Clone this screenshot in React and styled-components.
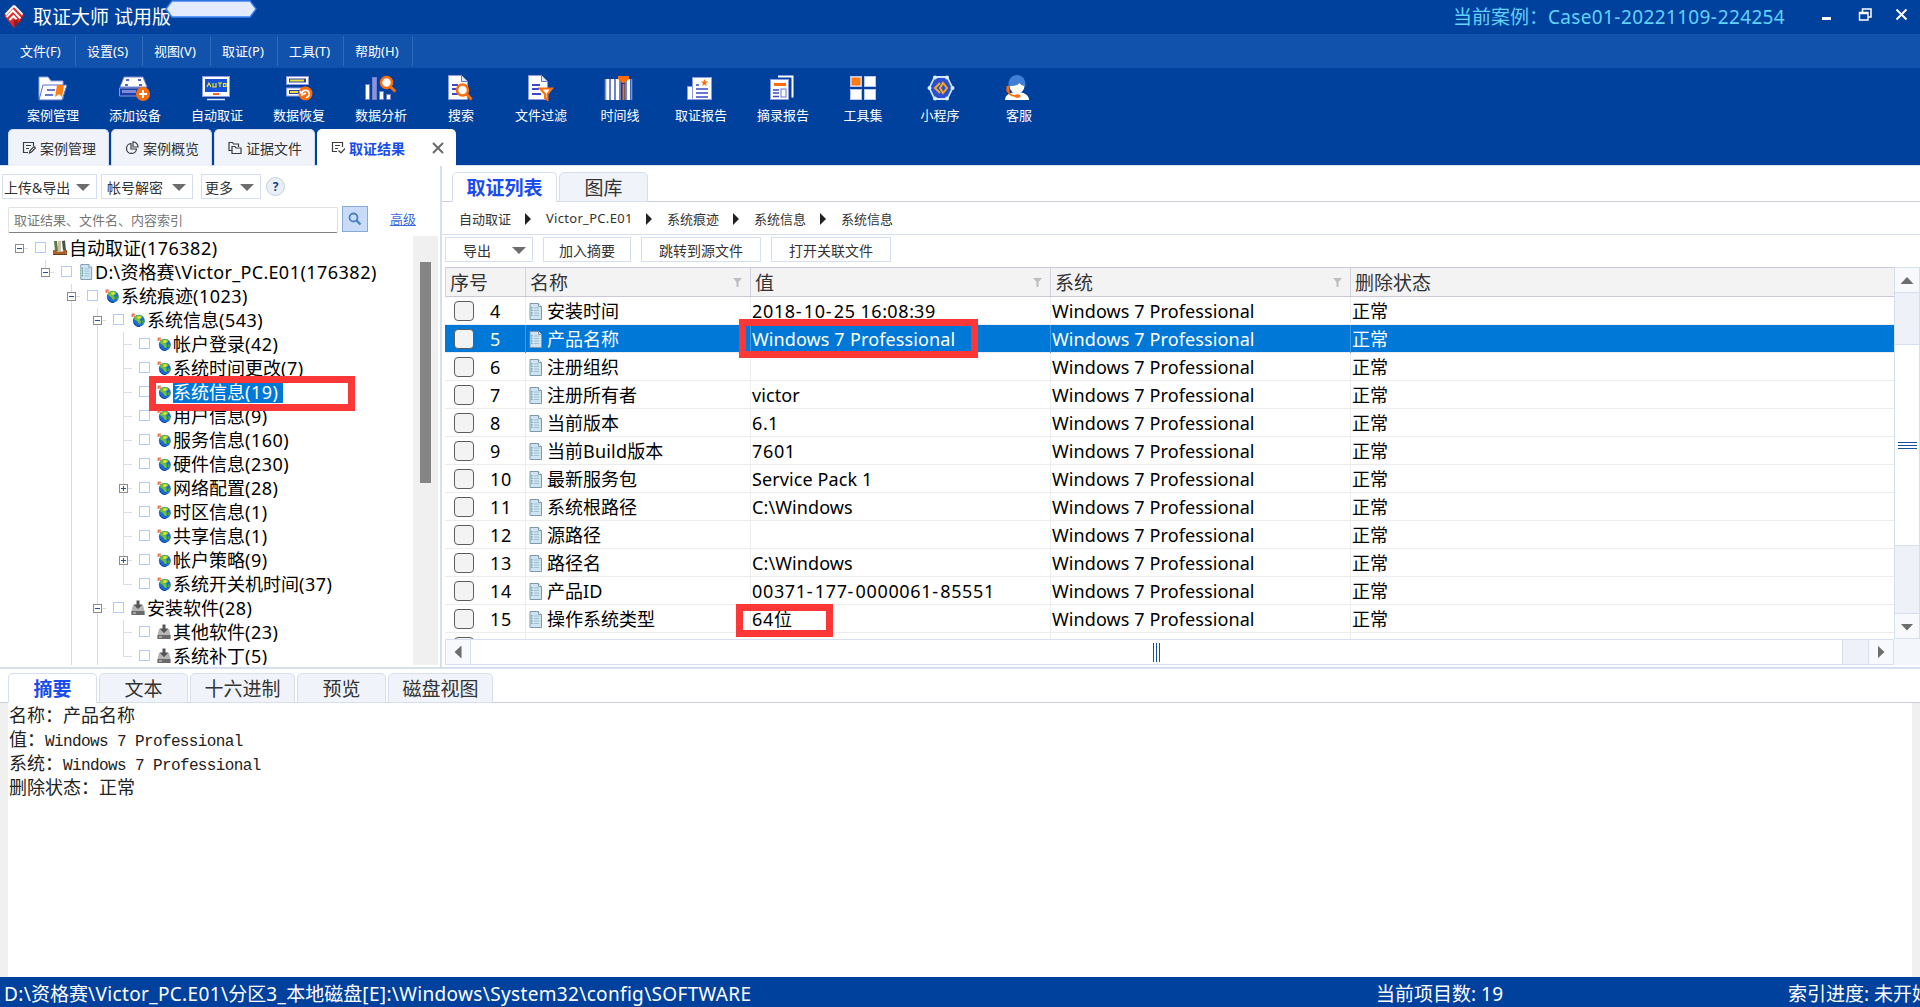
import React from "react";
import styled, { createGlobalStyle, css } from "styled-components";

const Global = createGlobalStyle`
  * { box-sizing: border-box; }
  html, body { margin: 0; padding: 0; }
  body { overflow: hidden; background: #fff; }
`;

const sans = `"Noto Sans", "Noto Sans CJK SC", sans-serif`;
const cjk = `"Noto Sans CJK SC", sans-serif`;
const navy = "#00419e";
const edge = "#d5dff0";
const red = "#fb3737";

/* ---------- text with separately tracked latin, digit and hyphen runs ---------- */
const Run = styled.span`
  letter-spacing: ${(p) => p.$ls}px;
`;
const Mixed = ({ text, ls = 0.1, digits = ls, hyphen = digits }) =>
  text.split(/([\u2e80-\uffef]+|[0-9]+|-)/).map((part, i) => {
    if (!part) return null;
    if (/^[\u2e80-\uffef]/.test(part)) return part;
    const gap = part === "-" ? hyphen : /^[0-9]/.test(part) ? digits : ls;
    return <Run key={i} $ls={gap}>{part}</Run>;
  });

/* ---------- shell ---------- */
const Shell = styled.div`
  width: 1920px;
  height: 1007px;
  display: flex;
  flex-direction: column;
  overflow: hidden;
  background: #fff;
  color: #000;
  font-family: ${sans};
  font-size: 18px;
  white-space: pre;
`;
const TitleBar = styled.header`
  position: relative;
  height: 34px;
  flex: none;
  display: flex;
  align-items: center;
  padding-left: 4px;
  background: ${navy};
  color: #fff;
  font-size: 19px;
  line-height: 34px;
`;
const AppName = styled.div`
  margin-left: 9px;
  flex: 1;
`;
const CaseName = styled.div`
  width: 369px;
  color: #62d2fb;
`;
const WinButtons = styled.div`
  width: 98px;
  height: 34px;
`;
const Pill = styled.svg`
  position: absolute;
  left: 165px;
  top: 0;
`;
const MenuBar = styled.nav`
  height: 34px;
  flex: none;
  display: flex;
  align-items: center;
  background: #1152ad;
  color: #fff;
  font-size: 13px;
`;
const MenuItem = styled.div`
  width: ${(p) => p.$w}px;
  height: 30px;
  line-height: 30px;
  padding-left: ${(p) => p.$pad || 11}px;
  border-right: 1px solid #2f69ba;
`;
const Toolbar = styled.div`
  height: 61px;
  flex: none;
  display: flex;
  padding-left: 12px;
  background: ${navy};
  color: #fff;
  font-size: 13px;
`;
const Tool = styled.div`
  width: ${(p) => p.$w}px;
  padding-top: 7px;
  display: flex;
  flex-direction: column;
  align-items: center;
  line-height: 20px;
  svg { display: block; margin: 0 2px 4px 0; }
`;
const TabStrip = styled.div`
  height: 37px;
  flex: none;
  display: flex;
  gap: 2px;
  padding-left: 8px;
  background: ${navy};
  border-bottom: 1px solid ${edge};
`;
const PageTab = styled.div`
  height: 37px;
  width: ${(p) => (p.$active ? 139 : 101)}px;
  padding-left: 13px;
  display: flex;
  align-items: center;
  border: 1px solid ${(p) => (p.$active ? "#fff" : "#d3ddee")};
  border-bottom: 0;
  border-radius: 5px 5px 0 0;
  background: ${(p) => (p.$active ? "#fff" : "#f0f3f9")};
  color: ${(p) => (p.$active ? "#194bee" : "#333")};
  font-weight: ${(p) => (p.$active ? 700 : 400)};
  font-size: 14px;
  svg { margin-right: 4px; }
`;
const TabClose = styled.div`
  margin-left: 27px;
  display: flex;
`;

/* ---------- main split ---------- */
const Work = styled.main`
  height: 503px;
  flex: none;
  display: flex;
  border-bottom: 2px solid ${edge};
`;
const LeftPane = styled.section`
  width: 442px;
  flex: none;
  padding: 8px 0 0;
  border-right: 2px solid ${edge};
`;
const LeftTools = styled.div`
  display: flex;
  height: 25px;
  padding-left: 2px;
  color: #333;
  font-size: 14px;
`;
const DropButton = styled.div`
  width: ${(p) => p.$w}px;
  margin-right: ${(p) => p.$mr}px;
  height: 25px;
  padding: 0 6px 0 ${(p) => p.$pl}px;
  display: flex;
  align-items: center;
  justify-content: space-between;
  border: 1px solid ${edge};
  background: #fff;
`;
const Help = styled.div`
  width: 19px;
  height: 19px;
  margin-top: 3px;
  border: 1px solid #c3d0e2;
  border-radius: 50%;
  background: #e9eff5;
  color: #173f8c;
  font: 700 12px/17px ${sans};
  text-align: center;
`;
const SearchRow = styled.div`
  display: flex;
  height: 30px;
  padding: 8px 0 0 8px;
`;
const SearchBox = styled.div`
  width: 330px;
  height: 26px;
  padding-left: 5px;
  border: 1px solid #e2e2e2;
  border-bottom: 1px solid #808080;
  border-radius: 2px;
  color: #777;
  font: 13px/23px ${cjk};
`;
const SearchButton = styled.div`
  width: 26px;
  height: 26px;
  margin-left: 4px;
  margin-top: -1px;
  display: flex;
  align-items: center;
  justify-content: center;
  border: 1px solid #88abd3;
  background: #c8dcfa;
`;
const AdvLink = styled.a`
  margin-left: 22px;
  color: #3a6cdd;
  text-decoration: underline;
  font: 13px/24px ${cjk};
`;
const TreeArea = styled.div`
  display: flex;
  height: 429px;
  margin-top: 7px;
`;
const Tree = styled.div`
  position: relative;
  width: 413px;
  overflow: hidden;
`;
const TreeTrack = styled.div`
  width: 25px;
  padding: 26px 7px 0;
  background: #f0f0f0;
`;
const TreeThumb = styled.div`
  height: 221px;
  background: #858585;
`;
const TreeRow = styled.div`
  height: 24px;
  padding-left: 6px;
  display: flex;
  align-items: center;
`;
const vline = (h) => `linear-gradient(#dcdcdc,#dcdcdc) 13px 0 / 1px ${h}px no-repeat`;
const stub = `linear-gradient(#dcdcdc,#dcdcdc) 13px 12px / 9px 1px no-repeat`;
const guideBg = {
  " ": "none",
  "|": vline(24),
  T: `${vline(24)}, ${stub}`,
  L: `${vline(12)}, ${stub}`,
  ".": stub,
};
const Guide = styled.div`
  width: 26px;
  height: 24px;
  padding: 8px 0 0 9px;
  background: ${(p) => guideBg[p.$kind]};
  svg { display: block; }
`;
const TreeCheck = styled.div`
  width: 11px;
  height: 11px;
  margin: -1px 7px 0 3px;
  border: 1px solid #b4caff;
  background: #fff;
`;
const TreeLabel = styled.div`
  margin-left: 2px;
  height: 21px;
  line-height: 21px;
  padding-right: 5px;
  ${(p) => p.$on && css`background: #0078d7; color: #fff;`}
`;
const Mark = styled.div`
  position: absolute;
  left: ${(p) => p.$x}px;
  top: ${(p) => p.$y}px;
  width: ${(p) => p.$w}px;
  height: ${(p) => p.$h}px;
  border: 7px solid ${red};
`;

/* ---------- right pane ---------- */
const RightPane = styled.section`
  width: 1478px;
  display: flex;
  flex-direction: column;
`;
const SubTabs = styled.div`
  height: ${(p) => p.$h}px;
  padding: ${(p) => p.$pad};
  flex: none;
  display: flex;
  align-items: flex-end;
  gap: 2px;
  background: linear-gradient(#cdcddd, #cdcddd) 0 100% / 100% 1px no-repeat;
`;
const SubTab = styled.div`
  width: ${(p) => p.$w}px;
  height: 30px;
  text-align: center;
  border: 1px solid ${edge};
  border-bottom-color: ${(p) => (p.$active ? "#fff" : edge)};
  border-radius: 5px 5px 0 0;
  background: ${(p) => (p.$active ? "#fff" : "#f0f3f9")};
  color: ${(p) => (p.$active ? "#194bee" : "#333")};
  font: ${(p) => (p.$active ? 700 : 400)} 19px/27px ${cjk};
`;
const Crumbs = styled.div`
  height: 33px;
  flex: none;
  display: flex;
  align-items: center;
  padding-left: 17px;
  border-bottom: 1px solid ${edge};
  color: #333;
  font-size: 13px;
`;
const Crumb = styled.span`
  width: ${(p) => p.$w}px;
`;
const CrumbArrow = styled.span`
  width: 6px;
  height: 12px;
  margin: 2px 15px 0 14px;
  background: #222;
  clip-path: polygon(0 0, 100% 50%, 0 100%);
`;
const Actions = styled.div`
  height: 32px;
  flex: none;
  display: flex;
  gap: 10px;
  padding: 2px 0 0 3px;
`;
const Action = styled.div`
  width: ${(p) => p.$w}px;
  height: 25px;
  padding: 0 ${(p) => (p.$menu ? "6px 0 17px" : "0")};
  display: flex;
  align-items: center;
  justify-content: ${(p) => (p.$menu ? "space-between" : "center")};
  border: 1px solid ${edge};
  color: #333;
  font-size: 14px;
`;
const GridArea = styled.div`
  height: 398px;
  display: grid;
  grid-template-columns: 1449px 26px;
  grid-template-rows: 372px 26px;
  margin-left: 3px;
`;
const Table = styled.div`
  position: relative;
  overflow: hidden;
`;
const Columns = css`
  display: grid;
  grid-template-columns: 81px 225px 300px 300px 543px;
`;
const HeadRow = styled.div`
  ${Columns}
  height: 30px;
  border-top: 1px solid #c9c9da;
  border-bottom: 1px solid #c9c9da;
  box-shadow: inset 1px 0 #d6d6e2;
  background: #f3f3f3;
  color: #333;
  font: 19px/26px ${cjk};
`;
const HeadCell = styled.div`
  display: flex;
  justify-content: space-between;
  align-items: center;
  padding: 0 8px 0 ${(p) => p.$pl || 4}px;
  border-right: ${(p) => (p.$last ? 0 : 1)}px solid #d3d3df;
`;
const Row = styled.div`
  ${Columns}
  height: 28px;
  border-bottom: 1px solid #ececec;
  ${(p) => p.$on && css`background: #0078d7; color: #fff;`}
`;
const Cell = styled.div`
  display: flex;
  align-items: center;
  padding-left: ${(p) => p.$pl}px;
  line-height: 27px;
  border-right: ${(p) => (p.$last ? 0 : 1)}px solid ${(p) => (p.$on ? "#3f98e0" : "#ededed")};
  svg { margin-right: 5px; flex: none; }
`;
const CellText = styled.span`
  padding-top: 1px;
`;
const Check = styled.div`
  width: 20px;
  height: 20px;
  margin-right: 16px;
  border: 1.5px solid #5e5e5e;
  border-radius: 4px;
  background: #f3f3f3;
`;
const Tri = styled.div`
  width: ${(p) => p.$w}px;
  height: ${(p) => p.$h}px;
  margin-top: ${(p) => p.$mt || 0}px;
  background: #6d6d6d;
  clip-path: polygon(${(p) =>
    ({
      down: "0 0, 100% 0, 50% 100%",
      up: "50% 0, 100% 100%, 0 100%",
      left: "100% 0, 100% 100%, 0 50%",
      right: "0 0, 100% 50%, 0 100%",
    })[p.$dir]});
`;
const VBar = styled.div`
  display: flex;
  flex-direction: column;
  border: 1px solid ${edge};
  border-bottom: 0;
  background: #eef1f7;
`;
const HBar = styled.div`
  display: flex;
  border: 1px solid ${edge};
  background: #eef1f7;
`;
const ArrowBox = styled.div`
  flex: none;
  width: ${(p) => (p.$h ? 25 : 24)}px;
  height: ${(p) => (p.$h ? 24 : p.$tall ? 26 : 25)}px;
  display: flex;
  align-items: center;
  justify-content: center;
  background: #f8f9fc;
  border: 0 solid ${edge};
  border-width: ${(p) => p.$bw};
`;
const VThumb = styled.div`
  margin-top: 51px;
  margin-bottom: 67px;
  flex: 1;
  display: flex;
  flex-direction: column;
  align-items: center;
  justify-content: center;
  gap: 2px;
  background: #fff;
  border: solid ${edge};
  border-width: 1px 0;
`;
const HThumb = styled.div`
  width: 1372px;
  margin-right: 25px;
  display: flex;
  align-items: center;
  justify-content: center;
  gap: 2px;
  background: #fff;
  border-right: 1px solid ${edge};
`;
const Grip = styled.i`
  width: ${(p) => (p.$v ? 19 : 1)}px;
  height: ${(p) => (p.$v ? 1 : 19)}px;
  background: #1250a3;
`;
const Corner = styled.div`
  background: #f3f6fb;
`;

/* ---------- bottom ---------- */
const Detail = styled.section`
  height: 274px;
  flex: none;
  padding-left: 1px;
  border: solid #f0f0f0;
  border-width: 0 8px;
`;
const Line = styled.p`
  margin: 0;
  height: 24px;
  line-height: 22px;
  font-family: ${cjk};
  font-size: 18px;
  color: #222;
`;
const Mono = styled.span`
  font: 16px/20px "Liberation Mono", monospace;
  letter-spacing: -0.61px;
`;
const StatusBar = styled.footer`
  height: 30px;
  flex: none;
  display: flex;
  padding-left: 4px;
  background: ${navy};
  color: #fff;
  font-size: 19px;
  line-height: 34px;
`;
const StatusItem = styled.div`
  width: ${(p) => p.$w}px;
  flex: none;
`;

/* ---------- icons ---------- */
const Logo = () => (
  <svg width="20" height="24" viewBox="0 0 20 24">
    <path d="M10 0 20 10.500 10 23 0 10.500Z" fill="#e3282b" />
    <path d="M10 .8 18.500 9.500M10 .8 1.500 9.500" stroke="#fff" strokeWidth="2" />
    <path d="M2.500 12 9 5.500l7.500 8M5.500 15 9.500 11l3.500 4" fill="none" stroke="#fff" strokeWidth="2" />
    <path d="M10 15v8l10-12.500-3 1.500v5l-3 1v-4Z" fill="#9f181c" />
  </svg>
);

const toolIcons = {
  folder: (
    <g>
      <path d="M3 24V2h9l3 4h12v18Z" fill="#fff" stroke="#8fa2e0" />
      <path d="M7 10h24l-5 15H3Z" fill="#fff" stroke="#5a6fca" />
      <path d="M11 15h8M9 20h8" stroke="#3a49c8" strokeWidth="1.6" />
      <path d="M21 10h7l-2 12-3-3-4 3Z" fill="#ff7e10" />
    </g>
  ),
  disk: (
    <g>
      <path d="M6 2h19l4 10H2Z" fill="#fff" stroke="#7a86d0" />
      <path d="M8 5h3M20 5h3M7 10h3M21 10h3" stroke="#5566c8" strokeWidth="2" />
      <path d="M1.500 13h27v8h-27Z" fill="#1b3fa5" stroke="#8d98e0" />
      <path d="M4 16.500h14" stroke="#8088d8" strokeWidth="3" />
      <circle cx="25" cy="19" r="7" fill="#ff6d0a" />
      <path d="M21 19h8M25 15v8" stroke="#fff" strokeWidth="2" />
    </g>
  ),
  monitor: (
    <g>
      <rect x="2.500" y="1.500" width="27" height="20" fill="#fff" stroke="#8f9be0" />
      <rect x="5" y="4" width="22" height="13" fill="#1552d8" />
      <path d="M7 12l2-4 2 4M13 8v4h3V8M18 8h4M20 8v4M23.500 8.500h2.500v3h-2.500z" fill="none" stroke="#f0ea20" strokeWidth="1.200" />
      <path d="M13 19h6" stroke="#ff5a20" strokeWidth="2" />
      <path d="M7 24.500h18" stroke="#dfe6ff" strokeWidth="1.500" />
    </g>
  ),
  restore: (
    <g>
      <rect x="4.500" y="1.500" width="22" height="8" fill="#fff" stroke="#8f9be0" />
      <path d="M7 5.500h17" stroke="#2340b8" strokeWidth="4" />
      <path d="M8 5.500h14" stroke="#e8e23a" strokeWidth="2" />
      <rect x="4.500" y="13" width="22" height="8" fill="#fff" stroke="#8f9be0" />
      <path d="M7 17h12" stroke="#2340b8" strokeWidth="4" />
      <path d="M8 17h8" stroke="#e8e23a" strokeWidth="2" />
      <circle cx="23.500" cy="18.500" r="7" fill="#ff6d0a" />
      <path d="M20 19a3.600 3.600 0 1 1 4 3.500M18 16l2 4 4-2" fill="none" stroke="#fff" strokeWidth="1.600" />
    </g>
  ),
  chart: (
    <g fill="#fff" stroke="#7480d0">
      <rect x="1.500" y="9.500" width="4" height="15" />
      <rect x="8.500" y="2.500" width="4" height="22" fill="#8a93dc" />
      <rect x="15.500" y="16.500" width="4" height="8" />
      <rect x="22.500" y="19.500" width="4" height="5" />
      <circle cx="22.500" cy="7.500" r="5.500" stroke="#ff6d0a" strokeWidth="2.500" />
      <path d="M26.500 12l5 4.500" stroke="#ff6d0a" strokeWidth="3" />
    </g>
  ),
  search: (
    <g>
      <path d="M4.500 24.500V.5h13l6 6v18Z" fill="#fff" stroke="#8f9be0" />
      <path d="M17.500.5v6h6" fill="#dfe4fa" stroke="#6474cc" />
      <path d="M8 10h6M8 14h6M8 19h8" stroke="#3a49c8" strokeWidth="1.800" />
      <circle cx="18.500" cy="15" r="5.500" fill="#fff" stroke="#ff6d0a" strokeWidth="2.500" />
      <path d="M22.500 19l5 5.500" stroke="#ff6d0a" strokeWidth="3" />
    </g>
  ),
  filter: (
    <g>
      <path d="M4.500 24.500V.5h13l6 6v18Z" fill="#fff" stroke="#8f9be0" />
      <path d="M17.500.5v6h6" fill="#dfe4fa" stroke="#6474cc" />
      <path d="M8 10h8M8 14h7M8 19h9" stroke="#3a49c8" strokeWidth="1.800" />
      <path d="M16 13.500h12l-4.500 5.500v6l-2.500-2v-4Z" fill="#fff" stroke="#ff6d0a" strokeWidth="2" />
    </g>
  ),
  timeline: (
    <g>
      <path d="M4.500 4v21M9.500 4v21M14.500 4v21M25.500 4v21" stroke="#fff" strokeWidth="3.200" />
      <path d="M7 4v21M12 4v21M17 4v21M23 4v21M28.500 4v21M2.500 4v21" stroke="#8690da" strokeWidth="1.600" />
      <path d="M20.500 9v16" stroke="#ff6d0a" strokeWidth="2" />
      <path d="M15 1h11v3l-4.500 4h-2L15 4Z" fill="#ff6d0a" />
    </g>
  ),
  report: (
    <g>
      <path d="M3.500 24.500v-13h5v13Z" fill="#fff" stroke="#8f9be0" />
      <rect x="8.500" y="2.500" width="19" height="22" fill="#fff" stroke="#8f9be0" />
      <path d="M12 10h3M12 14h12M12 18h12M12 22h12" stroke="#3a49c8" strokeWidth="1.600" />
      <path d="M20.500 4l1 2.600h2.600l-2.100 1.700.8 2.700-2.300-1.600-2.300 1.600.8-2.700L17 6.600h2.600Z" fill="#ff6d0a" />
    </g>
  ),
  excerpt: (
    <g>
      <path d="M12 1.500h14.500v21" fill="none" stroke="#fff" strokeWidth="2" />
      <rect x="4.500" y="4.500" width="18" height="20" fill="#fff" stroke="#8f9be0" />
      <path d="M8 9.500h12" stroke="#ff6d0a" strokeWidth="3" />
      <path d="M7 15h6M7 18h6M7 21.500h6" stroke="#3a49c8" strokeWidth="1.400" />
      <rect x="15" y="14" width="5" height="8" fill="#fff" stroke="#6474cc" />
    </g>
  ),
  grid: (
    <g fill="#fff" stroke="#b8c4f2">
      <rect x="4.500" y="1.500" width="11" height="10" />
      <rect x="18.500" y="1.500" width="11" height="10" />
      <rect x="4.500" y="14.500" width="11" height="10" />
      <rect x="18.500" y="14.500" width="11" height="10" />
      <rect x="6" y="3" width="8" height="7" fill="#ff7e10" stroke="#ff6d0a" />
    </g>
  ),
  hex: (
    <g transform="translate(2 0)">
      <path d="M9 2h14l6 11-6 11H9L3 13Z" transform="translate(1.500 0) scale(.9 1)" fill="#2b50cf" stroke="#cfe6ff" strokeWidth="1.800" />
      <g fill="#d8f0ff">
        <circle cx="10" cy="2.500" r="2" />
        <circle cx="22" cy="2.500" r="2" />
        <circle cx="27.500" cy="13" r="2" />
        <circle cx="22" cy="23.500" r="2" />
        <circle cx="10" cy="23.500" r="2" />
        <circle cx="4.500" cy="13" r="2" />
      </g>
      <path d="M15 8l-5 5 5 5M18 8l-3 5 3 5 4-5Z" fill="none" stroke="#f7a823" strokeWidth="2" />
    </g>
  ),
  agent: (
    <g>
      <path d="M3 25c0-5 5-8 12-8s12 3 12 8Z" fill="#fff" />
      <circle cx="15" cy="11" r="7.500" fill="#fff" />
      <path d="M6.500 11C6 4 10 0 15 0s9 4 8.500 11c-3 0-5-1-6-3-2 3-6 3-11 3Z" fill="#3f7fd6" />
      <path d="M6 11v6" stroke="#ff6d0a" strokeWidth="3" />
      <path d="M6 16c1 3 4 5 8 5" fill="none" stroke="#ff6d0a" strokeWidth="1.600" />
      <ellipse cx="15.500" cy="21" rx="3" ry="1.800" fill="#ff6d0a" />
    </g>
  ),
};
const ToolIcon = ({ name }) => (
  <svg width="32" height="26" viewBox="0 0 32 26">{toolIcons[name]}</svg>
);

const tabIcons = {
  edit: "M11.500 5V1.500h-10v10H6M4 4.500h5M4 7.500h3M7.500 12l.5-2.500L12 5.500l1.500 1.500-4 4Z",
  pie: "M6 2.500A5 5 0 1 0 11.500 8H6ZM8 .8V6h5A5 5 0 0 0 8 .8Z",
  files: "M4 5.500h3l1 1.500h5v5.500H4ZM4 9.500H1v-8h3.500l1 1.500h5v3",
  result: "M11.500 6V1.500h-10v9H6M4 4.500h5M4 7.500h3M7.500 9.500l2.500 2.500 4-4.500",
};
const TabIcon = ({ name }) => (
  <svg width="14" height="14" viewBox="0 0 14 14" fill="none" stroke="#3c3c3c" strokeWidth="1.200">
    <path d={tabIcons[name]} />
  </svg>
);

const Globe = () => (
  <svg width="14" height="16" viewBox="0 0 14 16">
    <circle cx="7.800" cy="8.800" r="6" fill="#1c6bd2" />
    <path d="M3 6c1-3 5-4 8-2 1 2-1 3-2 3 0 2 2 3 0 5-2 0-2-2-3-3S3 8 3 6Z" fill="#6cc435" />
    <path d="M6 5l3-1 1 2-3 1Z" fill="#f4e23a" />
    <path d="M11 8l2.500 1-1 3-2-1Z" fill="#3fa34a" />
    <path d="M.5 1.500h3.500v3.500H.5Z" fill="#ec7a58" />
    <path d="M2 5l2.500-3" stroke="#f8c9a8" />
    <path d="M3 11c1 2.500 3 3.700 6 3.500" stroke="#0c3f94" fill="none" />
  </svg>
);
const Books = () => (
  <svg width="14" height="16" viewBox="0 0 14 16">
    <path d="M1 1h3l1 10H2Z" fill="#5c7a4a" />
    <path d="M5 1h3v10H5Z" fill="#c9c2a0" />
    <path d="M9 1l3-.5 1 10h-3Z" fill="#44524c" />
    <path d="M0 10h3l1 1.500h6L11 10h3v5H0Z" fill="#a5622a" />
    <path d="M0 14.500h14" stroke="#6d3b14" />
  </svg>
);
const Doc = ({ w = 13, h = 17 }) => (
  <svg width={w} height={h} viewBox="0 0 13 17">
    <path d="M1 .5h8.500l3 3v13H1Z" fill="#cfe3f1" stroke="#7d99ad" />
    <path d="M9.500.5v3h3" fill="#fff" stroke="#7d99ad" />
    <path d="M5 5h5M5 7.500h5M5 10h5M5 12.500h5" stroke="#9dbfdc" />
    <path d="M2.800 4v10" stroke="#3f9a6c" strokeDasharray="1.500 1" />
  </svg>
);
const Install = () => (
  <svg width="14" height="16" viewBox="0 0 14 16">
    <path d="M2 5h10l1.500 6v4H.5v-4Z" fill="#b5b5b5" />
    <path d="M.5 11h13v4H.5Z" fill="#6a6a6a" />
    <path d="M2 13h3" stroke="#ddd" />
    <path d="M5.500.5h3v4h3L7 9 2.500 4.500h3Z" fill="#555" />
  </svg>
);
const treeIcons = { globe: <Globe />, books: <Books />, doc: <Doc w={14} h={16} />, install: <Install /> };

const Expander = ({ plus }) => (
  <svg width="9" height="9" viewBox="0 0 9 9">
    <rect x=".5" y=".5" width="8" height="8" fill="#fff" stroke="#8c8c8c" />
    <path d={plus ? "M2 4.500h5M4.500 2v5" : "M2 4.500h5"} stroke="#2b4a9e" />
  </svg>
);
const Funnel = () => (
  <svg width="9" height="9" viewBox="0 0 9 9">
    <path d="M0 0h9L5.500 4v5h-2V4Z" fill="#bdbdbd" />
  </svg>
);

/* ---------- data ---------- */
const menus = [["文件(F)", 76, 20], ["设置(S)", 67], ["视图(V)", 68], ["取证(P)", 67], ["工具(T)", 66], ["帮助(H)", 69]];
const tools = [
  ["案例管理", 82, "folder"], ["添加设备", 82, "disk"], ["自动取证", 82, "monitor"], ["数据恢复", 82, "restore"],
  ["数据分析", 82, "chart"], ["搜索", 78, "search"], ["文件过滤", 82, "filter"], ["时间线", 76, "timeline"],
  ["取证报告", 86, "report"], ["摘录报告", 78, "excerpt"], ["工具集", 82, "grid"], ["小程序", 72, "hex"], ["客服", 86, "agent"],
];
const tree = [
  [".", "-", "books", "自动取证(176382)"],
  [" L", "-", "doc", "D:\\资格赛\\Victor_PC.E01(176382)"],
  ["  T", "-", "globe", "系统痕迹(1023)"],
  ["  |T", "-", "globe", "系统信息(543)"],
  ["  ||T", "", "globe", "帐户登录(42)"],
  ["  ||T", "", "globe", "系统时间更改(7)"],
  ["  ||T", "", "globe", "系统信息(19)", true],
  ["  ||T", "", "globe", "用户信息(9)"],
  ["  ||T", "", "globe", "服务信息(160)"],
  ["  ||T", "", "globe", "硬件信息(230)"],
  ["  ||T", "+", "globe", "网络配置(28)"],
  ["  ||T", "", "globe", "时区信息(1)"],
  ["  ||T", "", "globe", "共享信息(1)"],
  ["  ||T", "+", "globe", "帐户策略(9)"],
  ["  ||L", "", "globe", "系统开关机时间(37)"],
  ["  |T", "-", "install", "安装软件(28)"],
  ["  ||T", "", "install", "其他软件(23)"],
  ["  ||L", "", "install", "系统补丁(5)"],
];
const records = [
  ["4", "安装时间", "2018-10-25 16:08:39"],
  ["5", "产品名称", "Windows 7 Professional"],
  ["6", "注册组织", ""],
  ["7", "注册所有者", "victor"],
  ["8", "当前版本", "6.1"],
  ["9", "当前Build版本", "7601"],
  ["10", "最新服务包", "Service Pack 1"],
  ["11", "系统根路径", "C:\\Windows"],
  ["12", "源路径", ""],
  ["13", "路径名", "C:\\Windows"],
  ["14", "产品ID", "00371-177-0000061-85551"],
  ["15", "操作系统类型", "64位"],
];
const crumbs = [["自动取证", 52], ["Victor_PC.E01", 86], ["系统痕迹", 52], ["系统信息", 52], ["系统信息", 52]];

const RecordRow = ({ rec: [no, name, value], on }) => (
  <Row $on={on}>
    <Cell $pl={9} $on={on}><Check /><CellText><Mixed text={no} digits={0.6} /></CellText></Cell>
    <Cell $pl={3} $on={on}><Doc /><CellText><Mixed text={name} ls={0.2} /></CellText></Cell>
    <Cell $pl={1} $on={on}><CellText><Mixed text={value} digits={0.65} hyphen={2.2} /></CellText></Cell>
    <Cell $pl={1} $on={on}><CellText><Mixed text="Windows 7 Professional" /></CellText></Cell>
    <Cell $pl={1} $last><CellText>正常</CellText></Cell>
  </Row>
);

export default function App() {
  return (
    <>
      <Global />
      <Shell>
        <TitleBar>
          <Logo />
          <AppName>取证大师 试用版</AppName>
          <CaseName><Mixed text="当前案例：Case01-20221109-224254" ls={0.3} digits={0.35} hyphen={0.8} /></CaseName>
          <WinButtons>
            <svg width="98" height="34" viewBox="0 0 98 34" fill="none" stroke="#fff" strokeWidth="2">
              <path d="M0 18.500h9" strokeWidth="3" />
              <path d="M40.500 13V9h8.500v8h-3" strokeWidth="1.500" />
              <path d="M37.500 12.500h8.500v7.500h-8.500ZM37 13.500h9" strokeWidth="1.400" />
              <path d="M74.500 9.500l10 10M84.500 9.500l-10 10" />
            </svg>
          </WinButtons>
          <Pill width="92" height="19" viewBox="0 0 92 19">
            <path d="M7 1h78l6 8-6 8H7L1 9Z" fill="#e3ecfe" stroke="#3c82f6" strokeWidth="1.300" />
          </Pill>
        </TitleBar>
        <MenuBar>
          {menus.map(([t, w, pad]) => (
            <MenuItem key={t} $w={w} $pad={pad}><Mixed text={t} /></MenuItem>
          ))}
        </MenuBar>
        <Toolbar>
          {tools.map(([t, w, icon]) => (
            <Tool key={t} $w={w}><ToolIcon name={icon} />{t}</Tool>
          ))}
        </Toolbar>
        <TabStrip>
          <PageTab><TabIcon name="edit" />案例管理</PageTab>
          <PageTab><TabIcon name="pie" />案例概览</PageTab>
          <PageTab><TabIcon name="files" />证据文件</PageTab>
          <PageTab $active>
            <TabIcon name="result" />取证结果
            <TabClose>
              <svg width="12" height="12" viewBox="0 0 12 12" stroke="#6a6a6a" strokeWidth="2">
                <path d="M1 1l10 10M11 1L1 11" />
              </svg>
            </TabClose>
          </PageTab>
        </TabStrip>

        <Work>
          <LeftPane>
            <LeftTools>
              <DropButton $w={95} $mr={4} $pl={1}><span>上传&amp;导出</span><Tri $w={14} $h={7} $mt={2} $dir="down" /></DropButton>
              <DropButton $w={92} $mr={8} $pl={5}>帐号解密<Tri $w={14} $h={7} $mt={2} $dir="down" /></DropButton>
              <DropButton $w={60} $mr={5} $pl={3}>更多<Tri $w={14} $h={7} $mt={2} $dir="down" /></DropButton>
              <Help>?</Help>
            </LeftTools>
            <SearchRow>
              <SearchBox>取证结果、文件名、内容索引</SearchBox>
              <SearchButton>
                <svg width="14" height="14" viewBox="0 0 14 14" fill="none" stroke="#4d7fc0">
                  <circle cx="5.500" cy="5.500" r="4" strokeWidth="1.800" />
                  <path d="M8.500 8.500l4 4" strokeWidth="2.400" />
                </svg>
              </SearchButton>
              <AdvLink>高级</AdvLink>
            </SearchRow>
            <TreeArea>
              <Tree>
                {tree.map(([guides, exp, icon, label, on], i) => (
                  <TreeRow key={i}>
                    {guides.split("").map((k, j) => (
                      <Guide key={j} $kind={k}>
                        {exp && j === guides.length - 1 ? <Expander plus={exp === "+"} /> : null}
                      </Guide>
                    ))}
                    <TreeCheck />
                    {treeIcons[icon]}
                    <TreeLabel $on={on}><Mixed text={label} ls={/^D/.test(label) ? 0.3 : 0.5} digits={0.5} /></TreeLabel>
                  </TreeRow>
                ))}
                <Mark $x={149} $y={140} $w={206} $h={35} />
              </Tree>
              <TreeTrack><TreeThumb /></TreeTrack>
            </TreeArea>
          </LeftPane>

          <RightPane>
            <SubTabs $h={36} $pad="0 0 0 10px">
              <SubTab $w={105} $active>取证列表</SubTab>
              <SubTab $w={89}>图库</SubTab>
            </SubTabs>
            <Crumbs>
              {crumbs.map(([t, w], i) => (
                <React.Fragment key={i}>
                  {i > 0 && <CrumbArrow />}
                  <Crumb $w={w}><Mixed text={t} ls={0.3} /></Crumb>
                </React.Fragment>
              ))}
            </Crumbs>
            <Actions>
              <Action $w={88} $menu>导出<Tri $w={14} $h={7} $mt={2} $dir="down" /></Action>
              <Action $w={88}>加入摘要</Action>
              <Action $w={120}>跳转到源文件</Action>
              <Action $w={120}>打开关联文件</Action>
            </Actions>
            <GridArea>
              <Table>
                <HeadRow>
                  <HeadCell $pl={5}>序号</HeadCell>
                  <HeadCell>名称<Funnel /></HeadCell>
                  <HeadCell>值<Funnel /></HeadCell>
                  <HeadCell>系统<Funnel /></HeadCell>
                  <HeadCell $last>删除状态</HeadCell>
                </HeadRow>
                {records.map((r) => <RecordRow key={r[0]} rec={r} on={r[0] === "5"} />)}
                <Row>
                  <Cell $pl={9}><Check /></Cell>
                  <Cell />
                  <Cell />
                  <Cell />
                  <Cell $last />
                </Row>
                <Mark $x={294} $y={52} $w={239} $h={39} />
                <Mark $x={291} $y={337} $w={97} $h={33} />
              </Table>
              <VBar>
                <ArrowBox $bw="0 0 1px"><Tri $w={13} $h={7} $mt={1} $dir="up" /></ArrowBox>
                <VThumb><Grip $v /><Grip $v /><Grip $v /></VThumb>
                <ArrowBox $tall $bw="1px 0"><Tri $w={13} $h={7} $mt={2} $dir="down" /></ArrowBox>
              </VBar>
              <HBar>
                <ArrowBox $h $bw="0 1px 0 0"><Tri $w={7} $h={13} $dir="left" /></ArrowBox>
                <HThumb><Grip /><Grip /><Grip /></HThumb>
                <ArrowBox $h $bw="0 0 0 1px"><Tri $w={7} $h={13} $dir="right" /></ArrowBox>
              </HBar>
              <Corner />
            </GridArea>
          </RightPane>
        </Work>

        <SubTabs $h={34} $pad="0 0 0 8px">
          <SubTab $w={89} $active>摘要</SubTab>
          <SubTab $w={89}>文本</SubTab>
          <SubTab $w={105}>十六进制</SubTab>
          <SubTab $w={89}>预览</SubTab>
          <SubTab $w={105}>磁盘视图</SubTab>
        </SubTabs>
        <Detail>
          <Line>名称：产品名称</Line>
          <Line>值：<Mono>Windows 7 Professional</Mono></Line>
          <Line>系统：<Mono>Windows 7 Professional</Mono></Line>
          <Line>删除状态：正常</Line>
        </Detail>
        <StatusBar>
          <StatusItem $w={1372}><Mixed text={"D:\\资格赛\\Victor_PC.E01\\分区3_本地磁盘[E]:\\Windows\\System32\\config\\SOFTWARE"} ls={0.34} /></StatusItem>
          <StatusItem $w={412}><Mixed text="当前项目数: 19" ls={0} digits={0.4} /></StatusItem>
          <StatusItem $w={132}><Mixed text="索引进度: 未开始" ls={0} /></StatusItem>
        </StatusBar>
      </Shell>
    </>
  );
}
